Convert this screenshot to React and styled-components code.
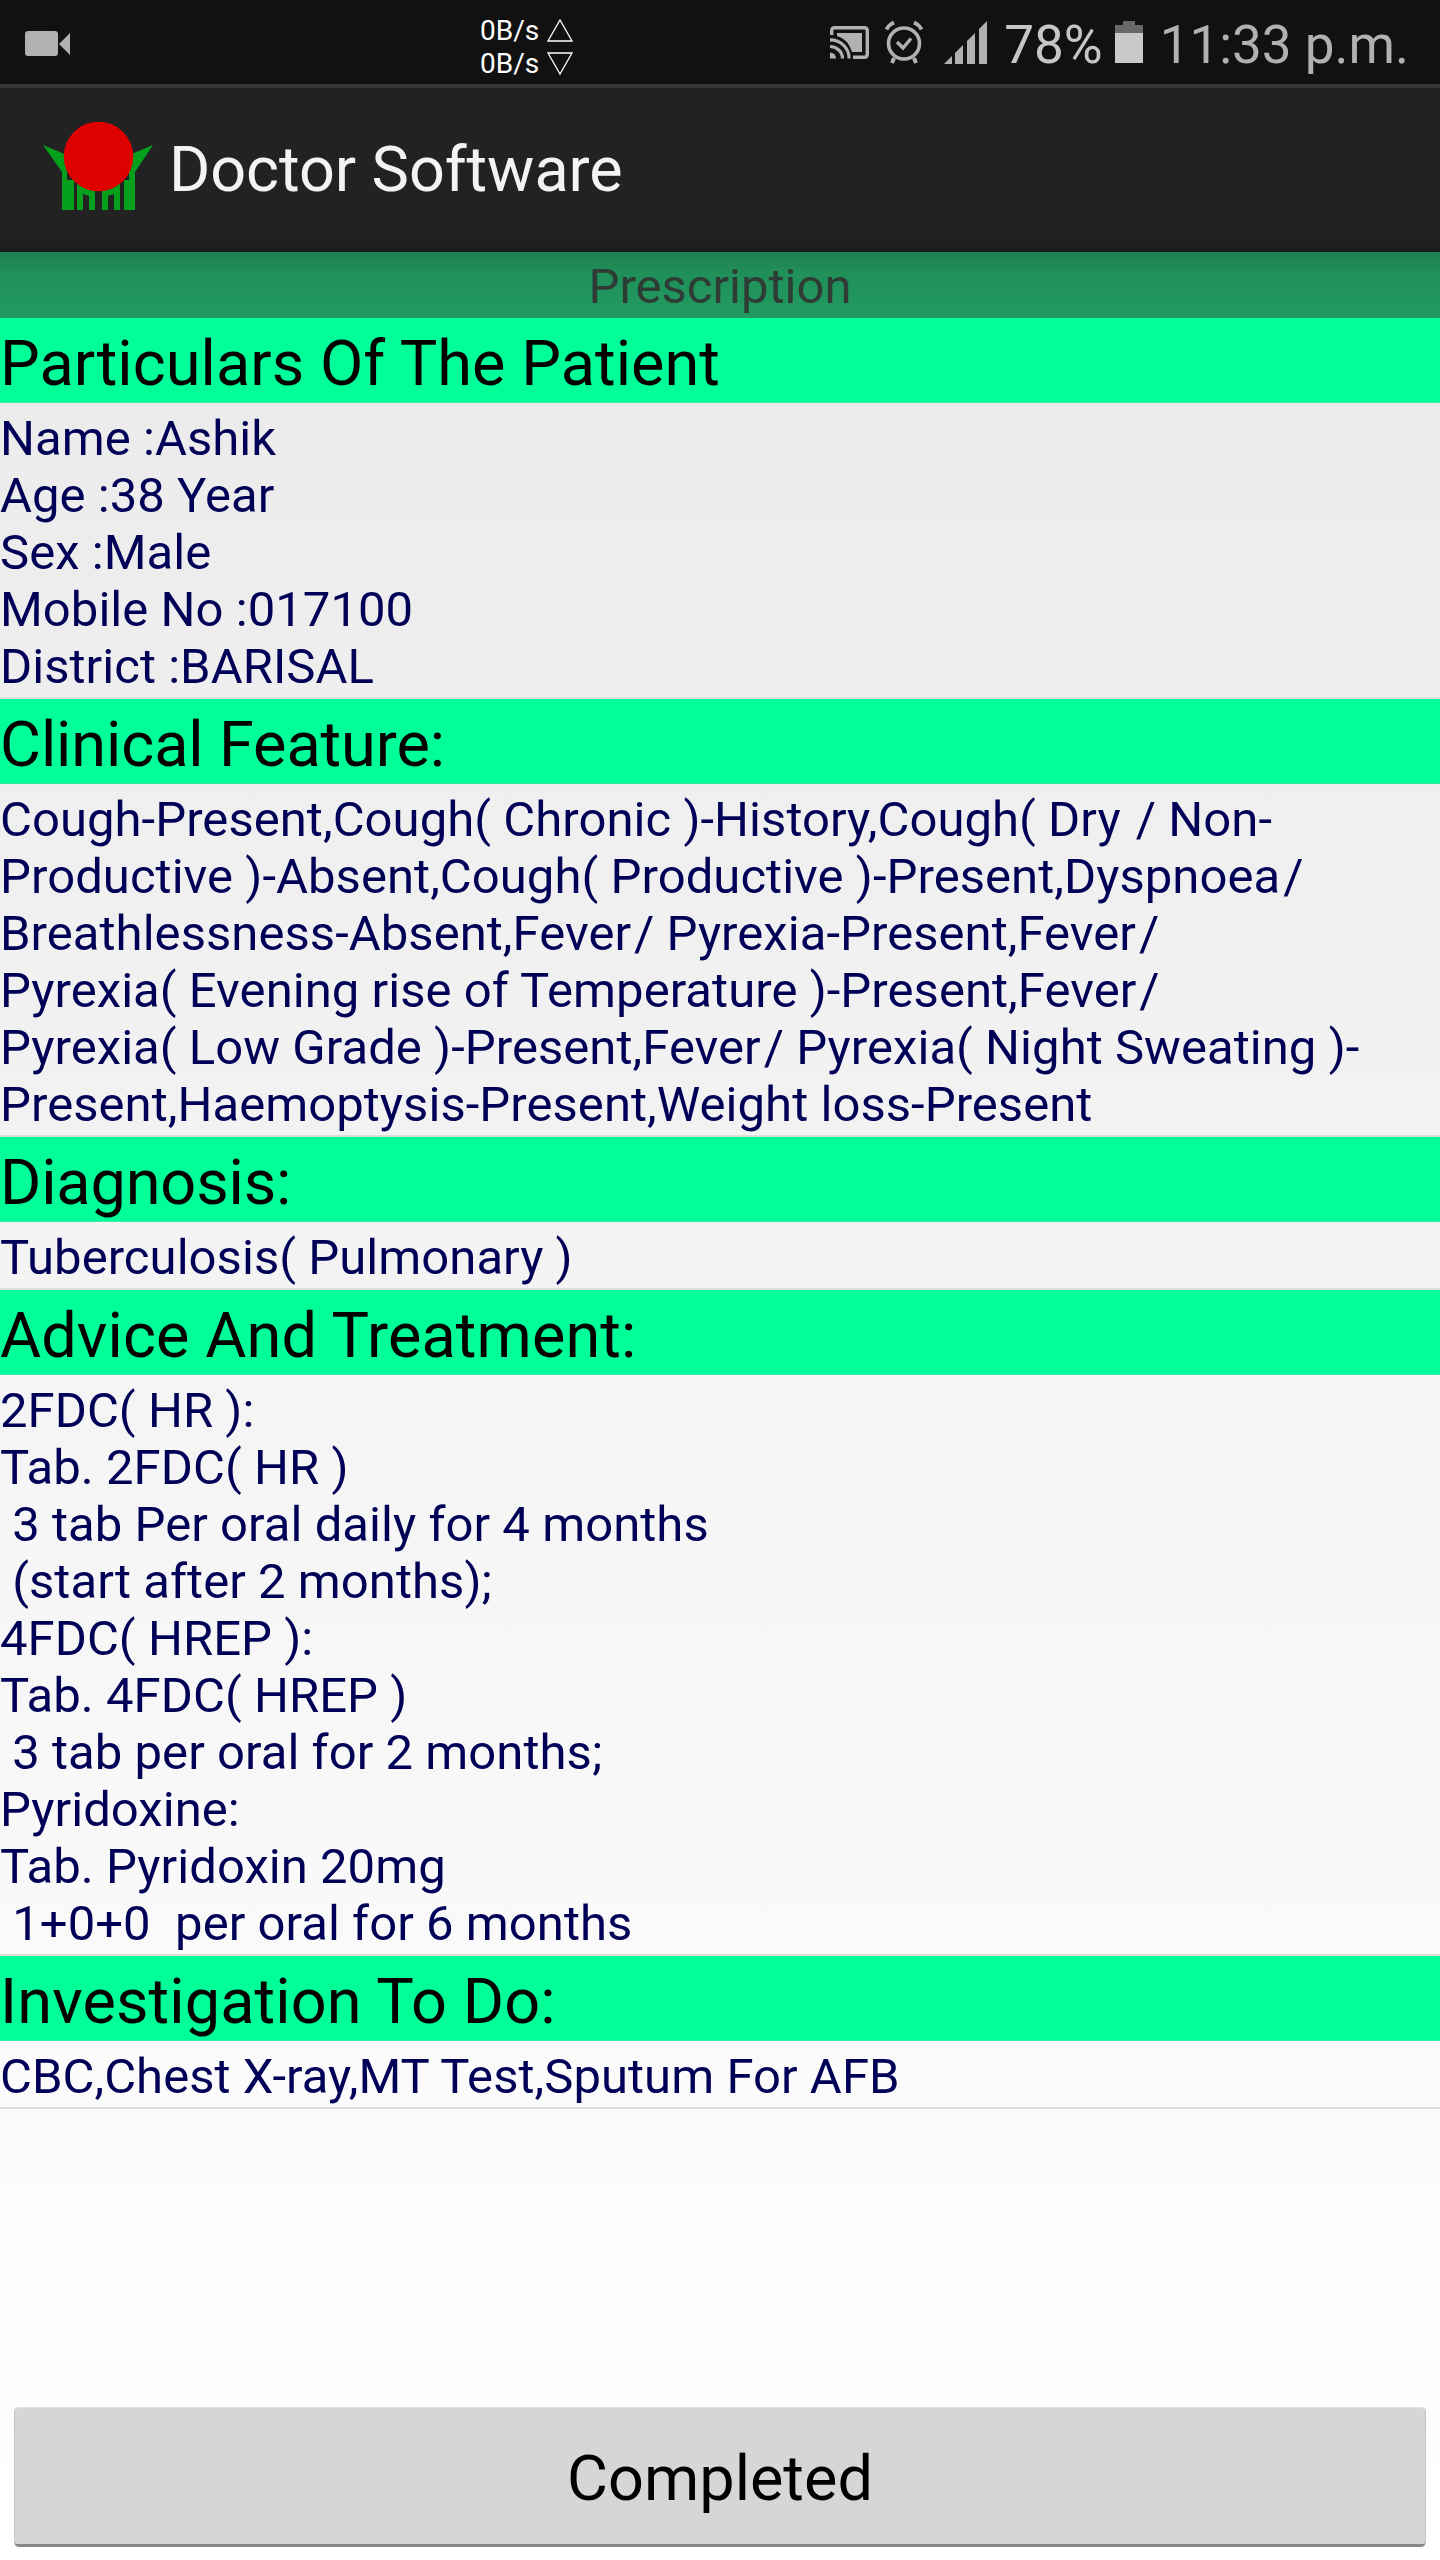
import React from "react";
import styled, { createGlobalStyle } from "styled-components";

const sections = [
  {
    titre: "Particulars Of The Patient",
    espacement: 0.05,
    lignes: [
      "Name :Ashik",
      "Age :38 Year",
      "Sex :Male",
      "Mobile No :017100",
      "District :BARISAL",
    ],
  },
  {
    titre: "Clinical Feature:",
    espacement: -0.1,
    lignes: [
      "Cough-Present,Cough( Chronic )-History,Cough( Dry / Non-",
      "Productive )-Absent,Cough( Productive )-Present,Dyspnoea/",
      "Breathlessness-Absent,Fever/ Pyrexia-Present,Fever/",
      "Pyrexia( Evening rise of Temperature )-Present,Fever/",
      "Pyrexia( Low Grade )-Present,Fever/ Pyrexia( Night Sweating )-",
      "Present,Haemoptysis-Present,Weight loss-Present",
    ],
  },
  {
    titre: "Diagnosis:",
    espacement: -0.15,
    lignes: ["Tuberculosis( Pulmonary )"],
  },
  {
    titre: "Advice And Treatment:",
    espacement: 0.12,
    lignes: [
      "2FDC( HR ):",
      "Tab. 2FDC( HR )",
      " 3 tab Per oral daily for 4 months",
      " (start after 2 months);",
      "4FDC( HREP ):",
      "Tab. 4FDC( HREP )",
      " 3 tab per oral for 2 months;",
      "Pyridoxine:",
      "Tab. Pyridoxin 20mg",
      " 1+0+0  per oral for 6 months",
    ],
  },
  {
    titre: "Investigation To Do:",
    espacement: 0.12,
    lignes: ["CBC,Chest X-ray,MT Test,Sputum For AFB"],
  },
];

const Camera = () => (
  <svg width="46" height="26" viewBox="0 0 46 26" fill="#b1b1b1">
    <rect width="33" height="25" rx="3" />
    <path d="M34 13L45 2V24Z" />
  </svg>
);

const Cast = () => (
  <svg width="39" height="33" viewBox="0 0 39 33" fill="none" stroke="#b1b1b1">
    <path d="M1.700 9V4.700Q1.700 1.700 4.700 1.700H34.300Q37.300 1.700 37.300 4.700V28.300Q37.300 31.300 34.300 31.300H23" strokeWidth="3.400" />
    <path d="M7 7H32V26H22Q18 13 7 10Z" fill="#b1b1b1" stroke="none" />
    <path d="M0 13.800A19 18 0 0 1 19 32.500M0 20.500A12.500 12 0 0 1 12.500 32.500" strokeWidth="3.200" />
    <path d="M0 26.500A6 6 0 0 1 6 32.500H0Z" fill="#b1b1b1" stroke="none" />
  </svg>
);

const Alarm = () => (
  <svg width="38" height="43" viewBox="0 0 38 43" fill="none" stroke="#b1b1b1">
    <circle cx="19" cy="22.500" r="15.500" strokeWidth="3.600" />
    <path d="M12 21L18 27L26 17.500" strokeWidth="3.400" />
    <path d="M1.500 8.500Q4 3.500 9 1.500M36.500 8.500Q34 3.500 29 1.500" strokeWidth="3.800" />
    <path d="M9 37L7 42M29 37L31 42" strokeWidth="4" />
  </svg>
);

const Signal = () => (
  <svg width="43" height="43" viewBox="0 0 43 43" fill="#b1b1b1">
    <path d="M0 43L8 35V43ZM11 32L19 24V43H11ZM23 20L31 12V43H23ZM35 8L43 0V43H35Z" />
  </svg>
);

const Battery = () => (
  <svg width="28" height="42" viewBox="0 0 28 42">
    <path d="M0 12V4H8V0H20V4H28V12Z" fill="#686868" />
    <rect y="12" width="28" height="30" fill="#c9c9c9" />
  </svg>
);

const Logo = () => (
  <svg width="110" height="88" viewBox="0 0 110 88">
    <g fill="#05a01b">
      <path d="M0 23L24 33V58H31V88H19V50Z" />
      <path d="M110 23L86 33V58H81V88H92V50Z" />
      <path d="M34 60H52V88H46V74L40 72V88H34Z" />
      <path d="M77 60H59V88H65V74L71 72V88H77Z" />
    </g>
    <circle cx="55.500" cy="34.500" r="34.800" fill="#df0101" />
  </svg>
);

const Fleche = ({ bas }) => (
  <svg width="26" height="23" viewBox="0 0 26 23" fill="none" stroke="#fff" strokeWidth="1.300">
    <path d={bas ? "M1 1H25L13 22Z" : "M1 22H25L13 1Z"} />
  </svg>
);

// un peu d'air avant chaque barre oblique
const avecBarres = (texte) =>
  texte.split("/").map((partie, index) => (
    <React.Fragment key={index}>
      {index > 0 && <Barre>/</Barre>}
      {partie}
    </React.Fragment>
  ));

const App = () => (
  <Page>
    <GlobalStyle />
    <StatusBar>
      <Enregistrement>
        <Camera />
      </Enregistrement>
      <Debit>
        <DebitLigne>
          0B/s <Fleche />
        </DebitLigne>
        <DebitLigne>
          0B/s <Fleche bas />
        </DebitLigne>
      </Debit>
      <Indicateurs>
        <Icones>
          <Cast />
          <Alarm />
        </Icones>
        <Signal />
        <Pourcentage>78%</Pourcentage>
        <Battery />
        <Heure>11:33 p.m.</Heure>
      </Indicateurs>
    </StatusBar>
    <ActionBar>
      <Logo />
      <NomApp>Doctor Software</NomApp>
    </ActionBar>
    <Bandeau>Prescription</Bandeau>
    <Liste>
      {sections.map((section) => (
        <section key={section.titre}>
          <Titre $espacement={section.espacement}>{section.titre}</Titre>
          <Contenu>
            {section.lignes.map((ligne, index) => (
              <Ligne key={index}>{avecBarres(ligne)}</Ligne>
            ))}
          </Contenu>
        </section>
      ))}
    </Liste>
    <Bouton>Completed</Bouton>
  </Page>
);

export default App;

const GlobalStyle = createGlobalStyle`
  * {
    box-sizing: border-box;
  }
  body {
    margin: 0;
  }
`;

const Page = styled.main`
  width: 1440px;
  height: 2560px;
  display: flex;
  flex-direction: column;
  overflow: hidden;
  font-family: Roboto, "Liberation Sans", sans-serif;
  background: linear-gradient(#e8e8e8, #ffffff);
  svg {
    display: block;
    flex: none;
  }
`;

const StatusBar = styled.header`
  height: 88px;
  flex: none;
  display: flex;
  align-items: flex-start;
  background-color: #111111;
  border-bottom: 4px solid #363636;
`;

const Enregistrement = styled.div`
  width: 480px;
  padding: 31px 0 0 25px;
`;

const Debit = styled.div`
  padding-top: 14px;
`;

const DebitLigne = styled.div`
  height: 33px;
  display: flex;
  align-items: center;
  gap: 8px;
  color: #ffffff;
  font-size: 28px;
  line-height: 33px;
`;

const Indicateurs = styled.div`
  height: 84px;
  margin-left: auto;
  padding-right: 31px;
  display: flex;
  align-items: center;
  color: #b1b1b1;
  font-size: 53px;
  line-height: 62px;
  white-space: nowrap;
`;

const Icones = styled.div`
  display: flex;
  align-items: center;
  gap: 16px;
  margin-right: 21px;
`;

const Pourcentage = styled.span`
  margin: 5px 12px 0 17px;
  color: #c6c6c6;
`;

const Heure = styled.span`
  margin: 5px 0 0 17px;
`;

const ActionBar = styled.div`
  height: 164px;
  flex: none;
  display: flex;
  align-items: center;
  padding-left: 43px;
  background: linear-gradient(#222222 90%, #1b1c1c);
  svg {
    margin-bottom: 8px;
  }
`;

const NomApp = styled.h1`
  margin: 0 0 0 16px;
  color: #f3f3f3;
  font-size: 63px;
  font-weight: 400;
  letter-spacing: -0.08px;
  line-height: 74px;
`;

const Bandeau = styled.div`
  height: 66px;
  flex: none;
  padding-top: 6px;
  color: #2f3b35;
  font-size: 49px;
  line-height: 58px;
  text-align: center;
  background: linear-gradient(#1f7f51, #208f59 30%, #219b61);
`;

const Liste = styled.div`
  flex: 1;
`;

const Titre = styled.h2`
  height: 85px;
  margin: 0;
  padding-top: 9px;
  color: #000000;
  font-size: 63px;
  font-weight: 400;
  letter-spacing: ${({ $espacement }) => $espacement}px;
  line-height: 74px;
  background-color: #00ff99;
  border-bottom: 1px solid #36e8aa;
`;

const Contenu = styled.div`
  padding: 7px 0 2px;
  color: #000057;
  font-size: 49px;
  letter-spacing: 0.05px;
  line-height: 57px;
  border-bottom: 2px solid #dddddd;
`;

const Ligne = styled.div`
  white-space: pre;
`;

const Barre = styled.span`
  margin-left: 3px;
`;

const Bouton = styled.button`
  height: 140px;
  flex: none;
  margin: 0 14px 13px;
  padding: 4px 0 0;
  border: 1px solid #c4c4c4;
  border-top-color: #e0e0e0;
  border-bottom: 3px solid #858585;
  border-radius: 5px;
  background-color: #d6d6d6;
  color: #000000;
  font-family: inherit;
  font-size: 63px;
`;
